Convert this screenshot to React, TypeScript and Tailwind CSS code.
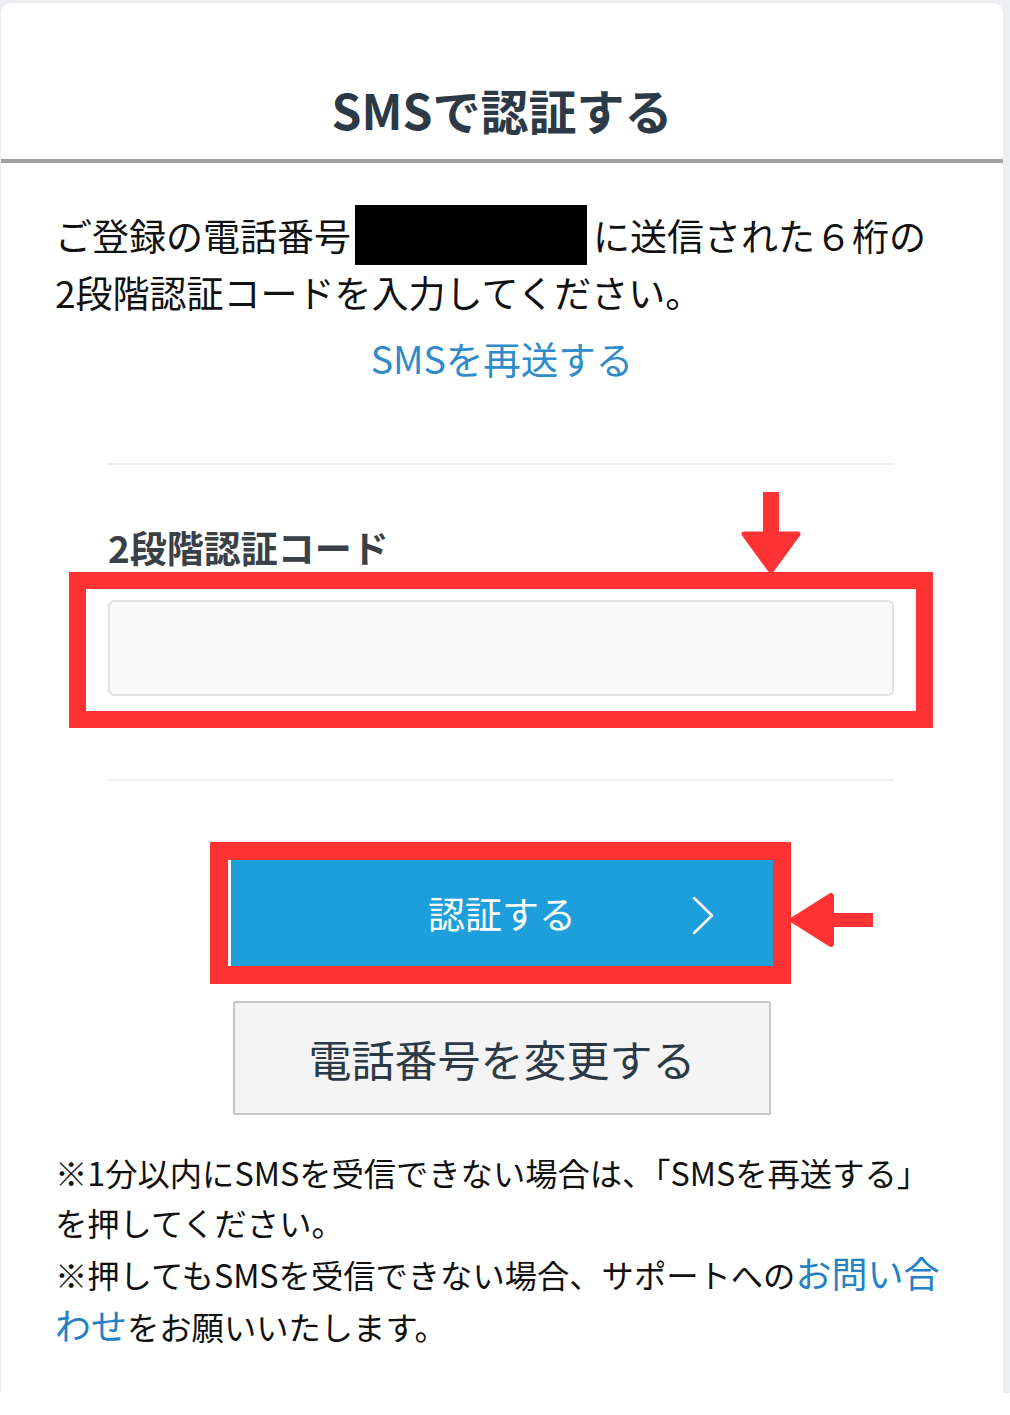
import React from "react";

export default function App() {
  return (
    <div
      className="bg-white min-h-[1415px] w-[1010px]"
      style={{ fontFamily: '"Noto Sans CJK JP", "Noto Sans", sans-serif' }}
    >
      <div className="h-[1393px] bg-[#eceef1] pt-[3px] pl-[1px] pr-[7px] flex flex-col">
        <div className="flex-1 bg-white rounded-t-[10px] flex flex-col">
          {/* Header */}
          <div className="h-[160px] border-b-4 border-[#a0a0a0] flex justify-center pt-[72px]">
            <h1 className="text-[48px] leading-[69px] font-bold text-[#2c3a47]">
              SMSで認証する
            </h1>
          </div>

          {/* Description */}
          <div className="px-[54px] mt-[44px] text-[37px] leading-[57px] text-[#111111]">
            <p>
              ご登録の電話番号
              <span className="inline-block align-top w-[232px] h-[60px] bg-black ml-[4px] mr-[6px] mt-[-2px] mb-[-1px]" />
              に送信された６桁の
              <br />
              2段階認証コードを入力してください。
            </p>
          </div>
          <div className="mt-[8px] text-center text-[37.5px] leading-[57px] text-[#2f8bc9]">
            SMSを再送する
          </div>

          <div className="w-[786px] ml-[107px] mt-[77px] h-[2px] bg-[#eeeeee]" />

          {/* Label + input */}
          <div className="w-[786px] ml-[107px] mt-[54px]">
            <div className="text-[37px] leading-[57px] font-bold text-[#3b4046]">
              2段階認証コード
            </div>
            <div className="relative mt-[24px]">
              <div className="h-[96px] rounded-[6px] border-2 border-[#e2e2e2] bg-[#fafafa]" />
              <div className="absolute top-[-28px] bottom-[-32px] left-[-39px] right-[-39px] border-[17px] border-[#ff3333]" />
              <svg
                className="absolute left-[632px] top-[-108px]"
                width="62"
                height="82"
                viewBox="0 0 62 82"
              >
                <rect x="23" y="0" width="16" height="46" fill="#ff3333" />
                <path
                  d="M4 42 L58 42 L31 79 Z"
                  fill="#ff3333"
                  stroke="#ff3333"
                  strokeWidth="5"
                  strokeLinejoin="round"
                />
              </svg>
            </div>
          </div>

          <div className="w-[786px] ml-[107px] mt-[83px] h-[2px] bg-[#eeeeee]" />

          {/* Buttons */}
          <div className="flex flex-col items-center mt-[79px]">
            <div className="relative w-[542px] h-[107px]">
              <div className="w-full h-full bg-[#1c9fdb] flex items-center justify-center relative">
                <span className="text-[37px] text-white leading-none">認証する</span>
                <svg
                  className="absolute right-[58px] top-[36px]"
                  width="24"
                  height="39"
                  viewBox="0 0 24 39"
                >
                  <polyline
                    points="3,2 21,19.5 3,37"
                    fill="none"
                    stroke="white"
                    strokeWidth="2.5"
                    strokeLinecap="round"
                    strokeLinejoin="round"
                  />
                </svg>
              </div>
              <div className="absolute top-[-18px] bottom-[-17px] left-[-21px] right-[-18px] border-[18px] border-[#ff3333]" />
              <svg
                className="absolute left-[558px] top-[32px]"
                width="84"
                height="56"
                viewBox="0 0 84 56"
              >
                <rect x="40" y="21" width="44" height="14" fill="#ff3333" />
                <path
                  d="M4 28 L42 4 L42 52 Z"
                  fill="#ff3333"
                  stroke="#ff3333"
                  strokeWidth="6"
                  strokeLinejoin="round"
                />
              </svg>
            </div>

            <div className="mt-[34px] w-[538px] h-[114px] bg-[#f4f4f4] border-2 border-[#c8c8c8] rounded-[2px] flex items-center justify-center">
              <span className="text-[43px] leading-none text-[#2c3a47]">電話番号を変更する</span>
            </div>
          </div>

          {/* Notes */}
          <div className="px-[54px] mt-[32px] text-[32.3px] leading-[50px] text-[#111111]">
            <p>
              ※1分以内にSMSを受信できない場合は、「SMSを再送する」
              <br />
              を押してください。
            </p>
            <p>
              ※押してもSMSを受信できない場合、サポートへの
              <span className="text-[36px] leading-[50px] text-[#2381c4]">お問い合</span>
              <br />
              <span className="text-[36px] leading-[50px] text-[#2381c4]">わせ</span>
              をお願いいたします。
            </p>
          </div>
        </div>
      </div>
    </div>
  );
}
